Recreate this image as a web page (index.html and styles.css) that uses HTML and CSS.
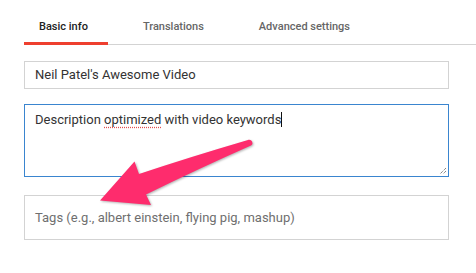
FILE: index.html
```html
<!DOCTYPE html>
<html>
<head>
<meta charset="utf-8">
<link rel="stylesheet" href="styles.css">
</head>
<body>
<div class="page">
  <nav class="tabs">
    <div class="tab active">Basic info</div>
    <div class="tab">Translations</div>
    <div class="tab">Advanced settings</div>
  </nav>
  <div class="form">
    <div class="field title">Neil Patel's Awesome Video</div>
    <div class="field desc">Description <span class="spell">optimized</span> with video keywords<span class="caret"></span>
      <svg class="grip" width="8" height="8" viewBox="0 0 8 8"><path d="M7 1 L1 7 M7 4 L4 7" stroke="#555" stroke-width="1" stroke-dasharray="1 1" fill="none"/></svg>
    </div>
    <div class="field tags">Tags (e.g., albert einstein, flying pig, mashup)</div>
  </div>
  <svg class="arrow" width="476" height="273" viewBox="0 0 476 273">
    <path d="M248 140 C 252 139, 254 144, 251 145.5 Q 200 168, 146 194.5 L 151 205 L 100 200.5 L 134.5 161.5 L 139 174 Q 190 157, 248 140 Z" fill="#fe2c6d"/>
  </svg>
</div>
</body>
</html>
```
FILE: styles.css
```css
html, body {
  margin: 0;
  padding: 0;
  background: #fff;
}
.page {
  position: relative;
  width: 476px;
  height: 273px;
  overflow: hidden;
  font-family: Roboto, "Liberation Sans", sans-serif;
}
.tabs {
  display: flex;
  gap: 20px;
  margin-left: 24px;
  height: 45px;
  border-bottom: 1px solid #d3d3d3;
  box-sizing: border-box;
}
.tab {
  padding: 20px 20px 0 15px;
  font-size: 11px;
  font-weight: 500;
  color: #666;
  box-sizing: border-box;
  height: 45px;
}
.tab.active {
  color: #222;
  border-bottom: 3px solid #ee3f2f;
  margin-bottom: -1px;
}
.form {
  display: flex;
  flex-direction: column;
  margin: 16px 0 0 24px;
  width: 425px;
}
.field {
  box-sizing: border-box;
  border: 1px solid #d3d3d3;
  font-size: 13px;
  color: #333;
  padding: 0 10px;
  position: relative;
}
.title {
  height: 28px;
  line-height: 26px;
}
.desc {
  margin-top: 15px;
  height: 73px;
  border-color: #3a85cf;
  padding-top: 6px;
  line-height: 18px;
}
.spell {
  text-decoration: underline dotted #e05050;
  text-underline-offset: 3px;
}
.caret {
  display: inline-block;
  width: 1px;
  height: 15px;
  background: #111;
  vertical-align: -3px;
}
.grip {
  position: absolute;
  right: 1px;
  bottom: 1px;
}
.tags {
  margin-top: 18px;
  height: 45px;
  line-height: 43px;
  color: #6f6f6f;
}
.arrow {
  position: absolute;
  left: 0;
  top: 0;
  filter: drop-shadow(1px 1.5px 1px rgba(0,0,0,0.3));
}
```
